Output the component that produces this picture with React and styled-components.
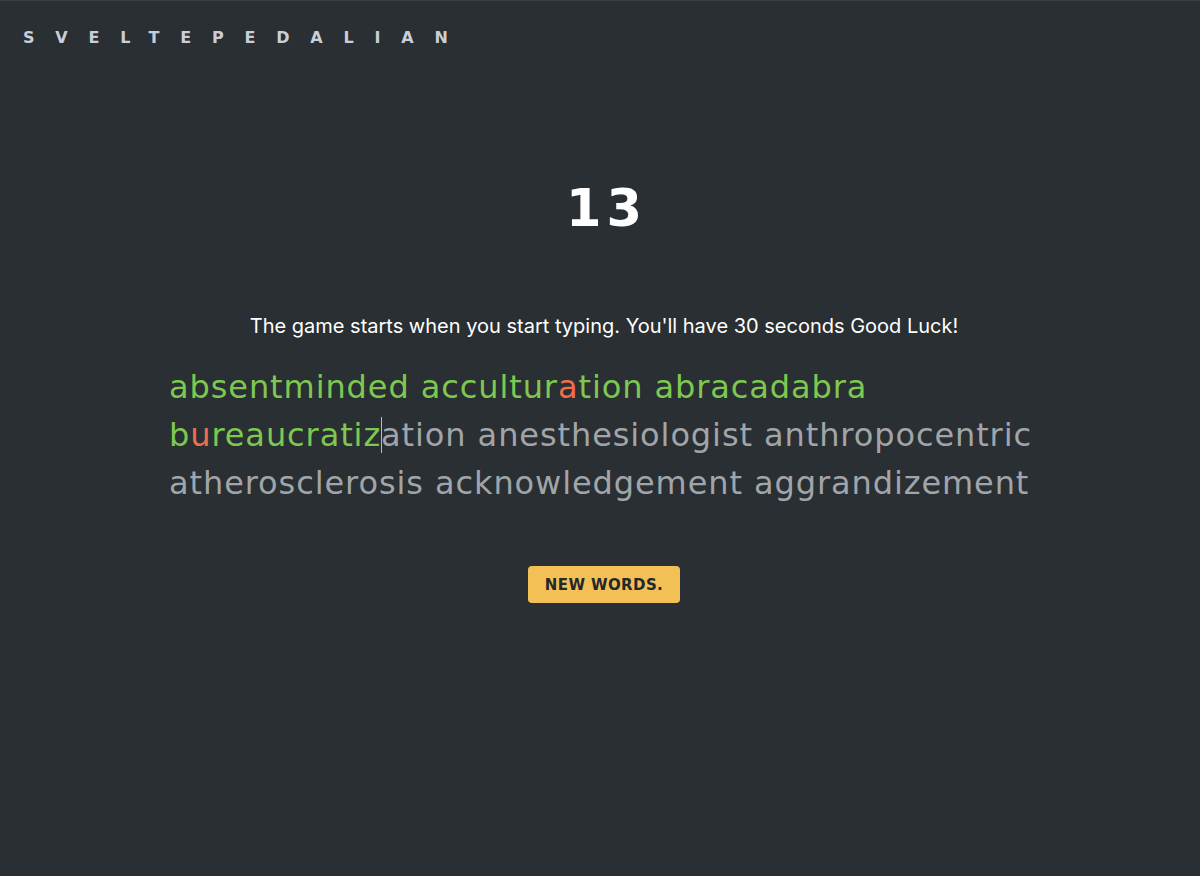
import styled, { createGlobalStyle } from 'styled-components'

const GlobalStyle = createGlobalStyle`
	html, body {
		margin: 0;
		padding: 0;
		background: #292f32;
	}
	body {
		font-family: 'Inter', 'Liberation Sans', sans-serif;
		border-top: 1px solid #3a4044;
	}
`

const colors = {
	background: '#292f32',
	correct: '#7ec850',
	wrong: '#ee6e4f',
	pending: '#a1a5a9',
	logo: '#c9ced8',
	button: '#f3c056',
	buttonText: '#22282b',
}

const Page = styled.div`
	min-height: 875px;
	display: flex;
	flex-direction: column;
	color: #ffffff;
`

const Header = styled.header`
	display: flex;
	align-items: center;
	height: 72px;
	padding-left: 23px;
`

const Logo = styled.h1`
	margin: 0;
	font-family: 'DejaVu Sans', sans-serif;
	font-weight: 800;
	font-size: 16px;
	letter-spacing: 20.8px;
	color: ${colors.logo};
`

const Main = styled.main`
	display: flex;
	flex-direction: column;
	align-items: center;
	padding-left: 8px;
`

const Timer = styled.div`
	margin-top: 106px;
	font-family: 'DejaVu Sans', sans-serif;
	font-weight: 800;
	font-size: 51px;
	line-height: 60px;
	letter-spacing: 5px;
	padding-left: 5px;
`

const Hint = styled.p`
	margin: 75px 0 0;
	font-size: 20px;
	line-height: 24px;
	color: #ffffff;
`

const Words = styled.div`
	width: 870px;
	margin-top: 25px;
	font-family: 'DejaVu Sans', sans-serif;
	font-size: 32px;
	letter-spacing: 0.9px;
	line-height: 48px;
	color: ${colors.pending};
`

const Line = styled.div`
	white-space: nowrap;
`

const Letter = styled.span`
	color: ${({ state }) =>
		state === 'correct' ? colors.correct : state === 'wrong' ? colors.wrong : colors.pending};
`

const Caret = styled.span`
	display: inline-block;
	width: 1px;
	height: 36px;
	margin-right: -1px;
	vertical-align: -7px;
	background: #b8bcc0;
`

const NewWords = styled.button`
	margin-top: 59px;
	width: 152px;
	height: 37px;
	border: none;
	border-radius: 4px;
	background: ${colors.button};
	color: ${colors.buttonText};
	font-family: 'DejaVu Sans', sans-serif;
	font-weight: 800;
	font-size: 15px;
	letter-spacing: 0.4px;
	cursor: pointer;
`

const lines = [
	['absentminded', 'acculturation', 'abracadabra'],
	['bureaucratization', 'anesthesiologist', 'anthropocentric'],
	['atherosclerosis', 'acknowledgement', 'aggrandizement'],
]

// typed input so far, one entry per word
const typed = ['absentminded', 'acculturetion', 'abracadabra', 'bxreaucratiz']

function letterState(wordIndex, charIndex, word) {
	const input = typed[wordIndex]
	if (input === undefined || charIndex >= input.length) return 'pending'
	return input[charIndex] === word[charIndex] ? 'correct' : 'wrong'
}

function App() {
	let wordIndex = -1
	const current = typed.length - 1
	const caretAt = typed[current].length

	return (
		<Page>
			<GlobalStyle />
			<Header>
				<Logo>SVELTEPEDALIAN</Logo>
			</Header>
			<Main>
				<Timer>13</Timer>
				<Hint>The game starts when you start typing. You'll have 30 seconds Good Luck!</Hint>
				<Words>
					{lines.map((line, li) => (
						<Line key={li}>
							{line.map((word, wi) => {
								wordIndex += 1
								const idx = wordIndex
								return (
									<span key={word}>
										{word.split('').map((ch, ci) => (
											<Letter key={ci} state={letterState(idx, ci, word)}>
												{idx === current && ci === caretAt && <Caret />}
												{ch}
											</Letter>
										))}
										{wi < line.length - 1 && ' '}
									</span>
								)
							})}
						</Line>
					))}
				</Words>
				<NewWords>NEW WORDS.</NewWords>
			</Main>
		</Page>
	)
}

export default App
